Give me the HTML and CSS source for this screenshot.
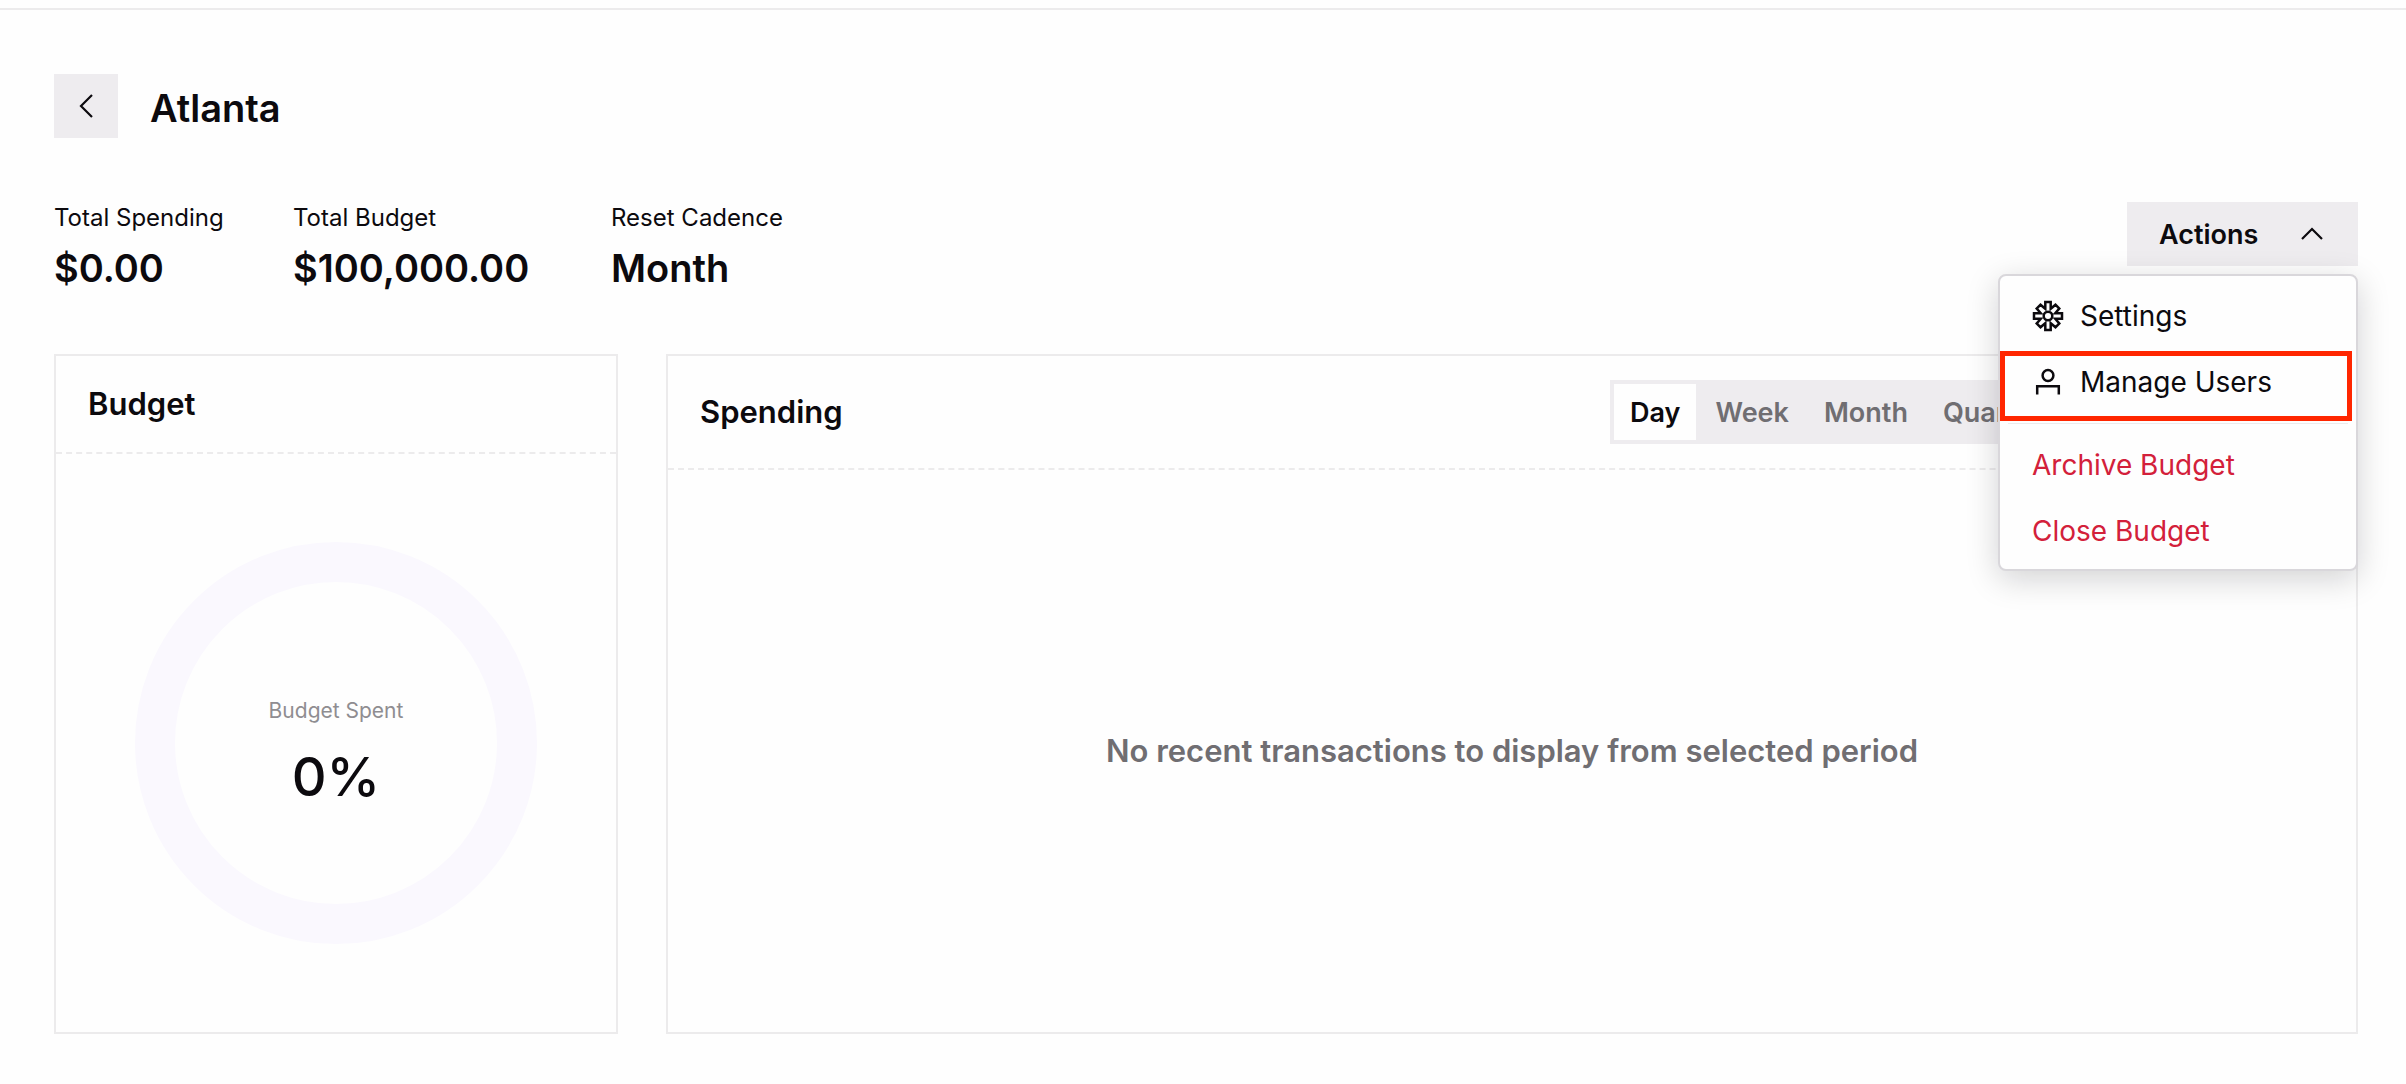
FILE: index.html
```html
<!DOCTYPE html>
<html lang="en">
<head>
<meta charset="utf-8">
<meta name="viewport" content="width=device-width, initial-scale=1">
<title>Atlanta</title>
<link rel="stylesheet" href="styles.css">
</head>
<body>
<main class="page">
  <header class="page-header">
    <button class="back" type="button" aria-label="Back">
      <svg width="16" height="24" viewBox="0 0 16 24" fill="none" stroke="currentColor" stroke-width="2.2" aria-hidden="true"><path d="M14 1 3 12l11 11"/></svg>
    </button>
    <h1 class="title">Atlanta</h1>
  </header>

  <section class="summary">
    <dl class="stats">
      <div class="stat"><dt>Total Spending</dt><dd>$0.00</dd></div>
      <div class="stat"><dt>Total Budget</dt><dd>$100,000.00</dd></div>
      <div class="stat"><dt>Reset Cadence</dt><dd>Month</dd></div>
    </dl>
    <div class="actions">
      <button class="actions-button" type="button" aria-expanded="true">
        Actions
        <svg width="22" height="14" viewBox="0 0 22 14" fill="none" stroke="currentColor" stroke-width="2.2" aria-hidden="true"><path d="m1 12 10-10 10 10"/></svg>
      </button>
      <ul class="menu">
        <li>
          <button class="menu-item" type="button">
            <svg width="32" height="32" viewBox="-16 -16 32 32" fill="none" stroke="currentColor" stroke-width="2.5" aria-hidden="true">
              <path d="M-2.7-14H2.7V-7.2L7.5-11.3 11.3-7.5 7.2-2.7H14V2.7H7.2L11.3 7.5 7.5 11.3 2.7 7.2V14H-2.7V7.2L-7.5 11.3-11.3 7.5-7.2 2.7H-14V-2.7H-7.2L-11.3-7.5-7.5-11.3-2.7-7.2Z"/>
              <circle r="4.3"/>
            </svg>
            Settings
          </button>
        </li>
        <li class="highlighted">
          <button class="menu-item" type="button">
            <svg width="32" height="32" viewBox="0 0 32 32" fill="none" stroke="currentColor" stroke-width="2.5" aria-hidden="true">
              <circle cx="16" cy="9.5" r="5.4"/>
              <path d="M5.2 28.5V20.2H26.8V28.5"/>
            </svg>
            Manage Users
          </button>
        </li>
        <li class="divider" role="separator"></li>
        <li><button class="menu-item danger" type="button">Archive Budget</button></li>
        <li><button class="menu-item danger" type="button">Close Budget</button></li>
      </ul>
    </div>
  </section>

  <div class="cards">
    <section class="card">
      <header class="card-header">
        <h2>Budget</h2>
      </header>
      <div class="card-body">
        <div class="donut">
          <span class="donut-label">Budget Spent</span>
          <span class="donut-value">0%</span>
        </div>
      </div>
    </section>
    <section class="card">
      <header class="card-header">
        <h2>Spending</h2>
        <div class="tabs">
          <button class="tab selected" type="button">Day</button>
          <button class="tab" type="button">Week</button>
          <button class="tab" type="button">Month</button>
          <button class="tab" type="button">Quarter</button>
          <button class="tab" type="button">Year</button>
        </div>
      </header>
      <div class="card-body">
        <p class="empty">No recent transactions to display from selected period</p>
      </div>
    </section>
  </div>
</main>
</body>
</html>
```
FILE: styles.css
```css
:root {
  --ink: #0c0a0e;
  --muted: #706e72;
  --fill: #eeecef;
  --line: #ecebec;
  --surface: #fefefe;
  --danger: #d3203a;
}

* {
  box-sizing: border-box;
}

body {
  margin: 0;
  background: var(--surface);
  color: var(--ink);
  font-family: Inter, "Liberation Sans", sans-serif;
}

h1, h2, p, dl, dd, ul {
  margin: 0;
  padding: 0;
}

button {
  border: 0;
  padding: 0;
  background: none;
  color: inherit;
  font: inherit;
  cursor: pointer;
}

.page {
  margin-top: 8px;
  border-top: 2px solid var(--line);
  padding: 64px 48px 48px 54px;
}

.page-header {
  display: flex;
  align-items: center;
  gap: 32px;
  margin-bottom: 64px;
}

.back {
  display: grid;
  place-items: center;
  width: 64px;
  height: 64px;
  background: var(--fill);
}

.title {
  padding-top: 4px;
  font-size: 38px;
  font-weight: 600;
  line-height: 52px;
}

.summary {
  display: flex;
  justify-content: space-between;
  align-items: flex-start;
  margin-bottom: 60px;
}

.stats {
  display: grid;
  grid-template-columns: 167px 246px auto;
  gap: 72px;
  white-space: nowrap;
}

.stat {
  display: grid;
  gap: 8px;
}

.stat dt {
  font-size: 24px;
  line-height: 32px;
}

.stat dd {
  font-size: 38px;
  font-weight: 600;
  line-height: 52px;
}

.actions {
  position: relative;
}

.actions-button {
  display: flex;
  align-items: center;
  justify-content: space-between;
  width: 231px;
  height: 64px;
  padding: 0 35px 0 32px;
  background: var(--fill);
  font-size: 27px;
  font-weight: 600;
}

.menu {
  position: absolute;
  z-index: 2;
  top: calc(100% + 8px);
  right: 0;
  width: 360px;
  padding: 7px 0 5px;
  border: 2px solid #d9d7db;
  border-radius: 8px;
  background: var(--surface);
  box-shadow: 0 8px 32px rgba(12, 10, 14, 0.18);
  list-style: none;
}

.menu-item {
  display: flex;
  align-items: center;
  gap: 16px;
  width: 100%;
  height: 66px;
  padding: 0 32px;
  font-size: 28px;
  text-align: left;
}

.danger {
  color: var(--danger);
}

.highlighted {
  position: relative;
}

.highlighted::after {
  content: "";
  position: absolute;
  inset: 2px 4px -6px 0;
  border: 5px solid #ff2600;
  pointer-events: none;
}

.divider {
  height: 1px;
  margin: 8px;
  background: var(--line);
}

.cards {
  display: grid;
  grid-template-columns: 1fr 3fr;
  gap: 48px;
}

.card {
  display: flex;
  flex-direction: column;
  min-width: 0;
  min-height: 680px;
  border: 2px solid var(--line);
}

.card-header {
  display: flex;
  align-items: center;
  justify-content: space-between;
  padding: 24px 32px;
  border-bottom: 2px dashed var(--line);
}

.card-header h2 {
  font-size: 31px;
  font-weight: 600;
  line-height: 48px;
}

.tabs {
  display: flex;
  gap: 3px;
  width: 714px;
  height: 64px;
  padding: 4px;
  background: var(--fill);
}

.tab {
  padding: 0 16px;
  color: var(--muted);
  font-size: 27px;
  font-weight: 600;
}

.tab.selected {
  background: var(--surface);
  color: var(--ink);
}

.card-body {
  display: grid;
  flex: 1;
  place-items: center;
}

.donut {
  display: flex;
  flex-direction: column;
  align-items: center;
  justify-content: center;
  gap: 18px;
  width: 402px;
  height: 402px;
  padding-top: 18px;
  border: 40px solid #faf8fe;
  border-radius: 50%;
}

.donut-label {
  color: #8f8d91;
  font-size: 21px;
  line-height: 32px;
}

.donut-value {
  font-size: 54px;
  font-weight: 500;
  line-height: 64px;
}

.empty {
  color: var(--muted);
  font-size: 31px;
  font-weight: 600;
  line-height: 48px;
}
```
